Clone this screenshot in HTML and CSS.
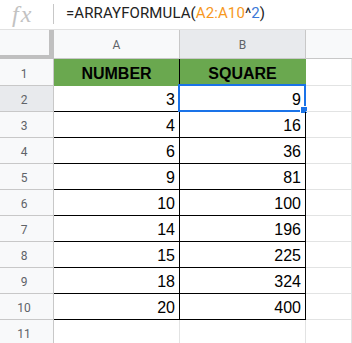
FILE: index.html
```html
<!DOCTYPE html>
<html>
<head>
<meta charset="utf-8">
<link rel="stylesheet" href="styles.css">
</head>
<body>
<div class="fbar">
  <span class="fx">fx</span>
  <span class="sep"></span>
  <span class="formula">=ARRAYFORMULA(<span class="ref">A2:A10</span>^<span class="num">2</span>)</span>
</div>
<div class="sheet">
  <div class="row hdr">
    <div class="corner"></div>
    <div class="ch ca">A</div>
    <div class="ch cb sel">B</div>
    <div class="ch cc"></div>
  </div>
  <div class="row r1">
    <div class="rh">1</div>
    <div class="c ca head">NUMBER</div>
    <div class="c cb head last">SQUARE</div>
    <div class="c cc"></div>
  </div>
  <div class="row">
    <div class="rh sel">2</div>
    <div class="c ca d">3</div>
    <div class="c cb d active">9<span class="selbox"></span><span class="handle"></span></div>
    <div class="c cc"></div>
  </div>
  <div class="row">
    <div class="rh">3</div>
    <div class="c ca d">4</div>
    <div class="c cb d">16</div>
    <div class="c cc"></div>
  </div>
  <div class="row">
    <div class="rh">4</div>
    <div class="c ca d">6</div>
    <div class="c cb d">36</div>
    <div class="c cc"></div>
  </div>
  <div class="row">
    <div class="rh">5</div>
    <div class="c ca d">9</div>
    <div class="c cb d">81</div>
    <div class="c cc"></div>
  </div>
  <div class="row">
    <div class="rh">6</div>
    <div class="c ca d">10</div>
    <div class="c cb d">100</div>
    <div class="c cc"></div>
  </div>
  <div class="row">
    <div class="rh">7</div>
    <div class="c ca d">14</div>
    <div class="c cb d">196</div>
    <div class="c cc"></div>
  </div>
  <div class="row">
    <div class="rh">8</div>
    <div class="c ca d">15</div>
    <div class="c cb d">225</div>
    <div class="c cc"></div>
  </div>
  <div class="row">
    <div class="rh">9</div>
    <div class="c ca d">18</div>
    <div class="c cb d">324</div>
    <div class="c cc"></div>
  </div>
  <div class="row">
    <div class="rh">10</div>
    <div class="c ca d">20</div>
    <div class="c cb d">400</div>
    <div class="c cc"></div>
  </div>
  <div class="row">
    <div class="rh">11</div>
    <div class="c ca"></div>
    <div class="c cb"></div>
    <div class="c cc"></div>
  </div>
</div>
</body>
</html>
```
FILE: styles.css
```css
* { box-sizing: border-box; }
html, body { margin: 0; padding: 0; background: #fff; }
body { width: 352px; height: 343px; overflow: hidden; font-family: "Liberation Sans", Arial, sans-serif; }

.fbar {
  height: 30px;
  border-bottom: 1px solid #e1e1e1;
  display: flex;
  align-items: center;
  position: relative;
}
.fx {
  font-family: "Liberation Serif", serif;
  font-style: italic;
  font-size: 24px;
  color: #c2c2c2;
  letter-spacing: 2px;
  margin-left: 12px;
  width: 41px;
  line-height: 22px;
  margin-top: -2px;
}
.sep {
  width: 1px;
  height: 20px;
  background: #c7c7c7;
  margin-top: -1px;
}
.formula {
  margin-left: 12px;
  font-family: Roboto, "Liberation Sans", sans-serif;
  font-size: 15px;
  letter-spacing: 0.1px;
  color: #222;
  margin-top: -3px;
}
.ref { color: #f7981d; }
.num { color: #3c78d8; }

.sheet { display: flex; flex-direction: column; }
.row { display: flex; height: 26px; }
.row.hdr { height: 29px; }
.row.r1 { height: 27px; }

.corner {
  width: 54px;
  border-right: 5px solid #c0c0c0;
  border-bottom: 4px solid #c0c0c0;
  background: #f8f9fa;
}
.ch {
  background: #f8f9fa;
  border-right: 1px solid #c8c8c8;
  border-bottom: 1px solid #c8c8c8;
  font-family: Roboto, "Liberation Sans", sans-serif;
  font-size: 12px;
  color: #5f6368;
  display: flex;
  align-items: center;
  justify-content: center;
  padding-top: 2px;
}
.ch.sel { background: #e8eaed; }
.ca { width: 126px; }
.cb { width: 126px; }
.cc { flex: 1; }
.ch.cc { border-right: none; }

.rh {
  width: 54px;
  background: #f8f9fa;
  border-right: 1px solid #c8c8c8;
  border-bottom: 1px solid #c8c8c8;
  font-family: Roboto, "Liberation Sans", sans-serif;
  font-size: 12px;
  color: #5f6368;
  display: flex;
  align-items: center;
  justify-content: center;
  padding-right: 5px;
  padding-top: 3px;
}
.rh.sel { background: #e8eaed; }

.c {
  border-right: 1px solid #e2e3e3;
  border-bottom: 1px solid #e2e3e3;
  font-size: 16px;
  color: #000;
  display: flex;
  align-items: flex-end;
  line-height: 18px;
  padding-bottom: 2px;
  position: relative;
}
.c.head {
  background: #6aa84f;
  font-weight: bold;
  justify-content: center;
  border-bottom-color: #6aa84f;
  border-right-color: #000;
}
.c.head.last { border-right-color: #6aa84f; }
.c.d {
  justify-content: flex-end;
  padding-right: 4px;
  border-right-color: #000;
  border-bottom-color: #000;
}
.selbox {
  position: absolute;
  left: -2px;
  top: -2px;
  right: -1px;
  bottom: -1px;
  border: 2px solid #1a73e8;
}
.handle {
  position: absolute;
  right: -3px;
  bottom: -3px;
  width: 8px;
  height: 8px;
  background: #1a73e8;
  border: 1px solid #fff;
}
```
